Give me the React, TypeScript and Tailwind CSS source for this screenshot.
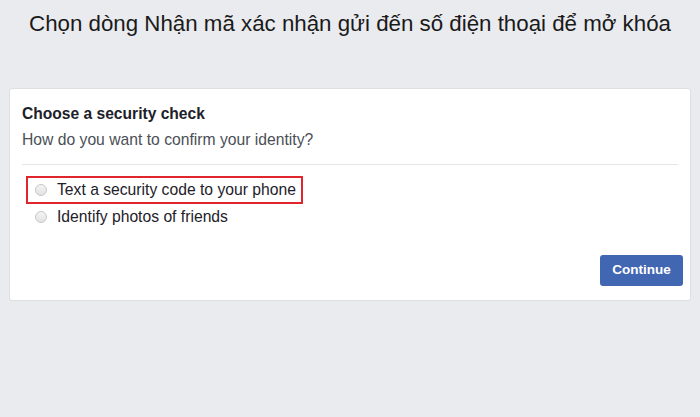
export default function App() {
  return (
    <div className="h-[417px] w-full overflow-hidden bg-[#e9ebee] font-['Liberation_Sans',Arial,sans-serif]">
      {/* Caption */}
      <h1 className="pt-[10px] text-center text-[22.3px] leading-[28px] text-[#1a1a1a]">
        Chọn dòng Nhận mã xác nhận gửi đến số điện thoại để mở khóa
      </h1>

      {/* Card */}
      <div className="mx-[9px] mt-[50px] h-[213px] rounded-[3px] border border-[#dddfe2] bg-white">
        <div className="px-[12px] pt-[16px]">
          <h2 className="text-[15.6px] font-bold leading-[18px] text-[#1d2129]">Choose a security check</h2>
          <p className="mt-[8px] text-[15.7px] leading-[18px] text-[#4b4f56]">How do you want to confirm your identity?</p>
        </div>
        <div className="mx-[12px] mt-[15px] border-t border-[#e5e5e5]" />

        <div className="mt-[11px] flex flex-col px-[16px]">
          <label className="flex h-[28px] w-[277px] items-center gap-[10px] border-2 border-[#e0262c] pl-[7px]">
            <span className="h-[12px] w-[12px] rounded-full border border-[#c8c8c8] bg-gradient-to-b from-[#f4f4f4] to-[#e2e2e2]" />
            <span className="text-[15.7px] text-[#1d2129]">Text a security code to your phone</span>
          </label>
          <label className="flex h-[26px] items-center gap-[10px] pl-[9px]">
            <span className="h-[12px] w-[12px] rounded-full border border-[#c8c8c8] bg-gradient-to-b from-[#f4f4f4] to-[#e2e2e2]" />
            <span className="text-[15.7px] text-[#1d2129]">Identify photos of friends</span>
          </label>
        </div>

        <div className="mt-[25px] flex justify-end px-[7px]">
          <button className="h-[31px] w-[83px] rounded-[3px] bg-[#4267b2] text-[13.5px] font-bold text-white">
            Continue
          </button>
        </div>
      </div>
    </div>
  );
}
